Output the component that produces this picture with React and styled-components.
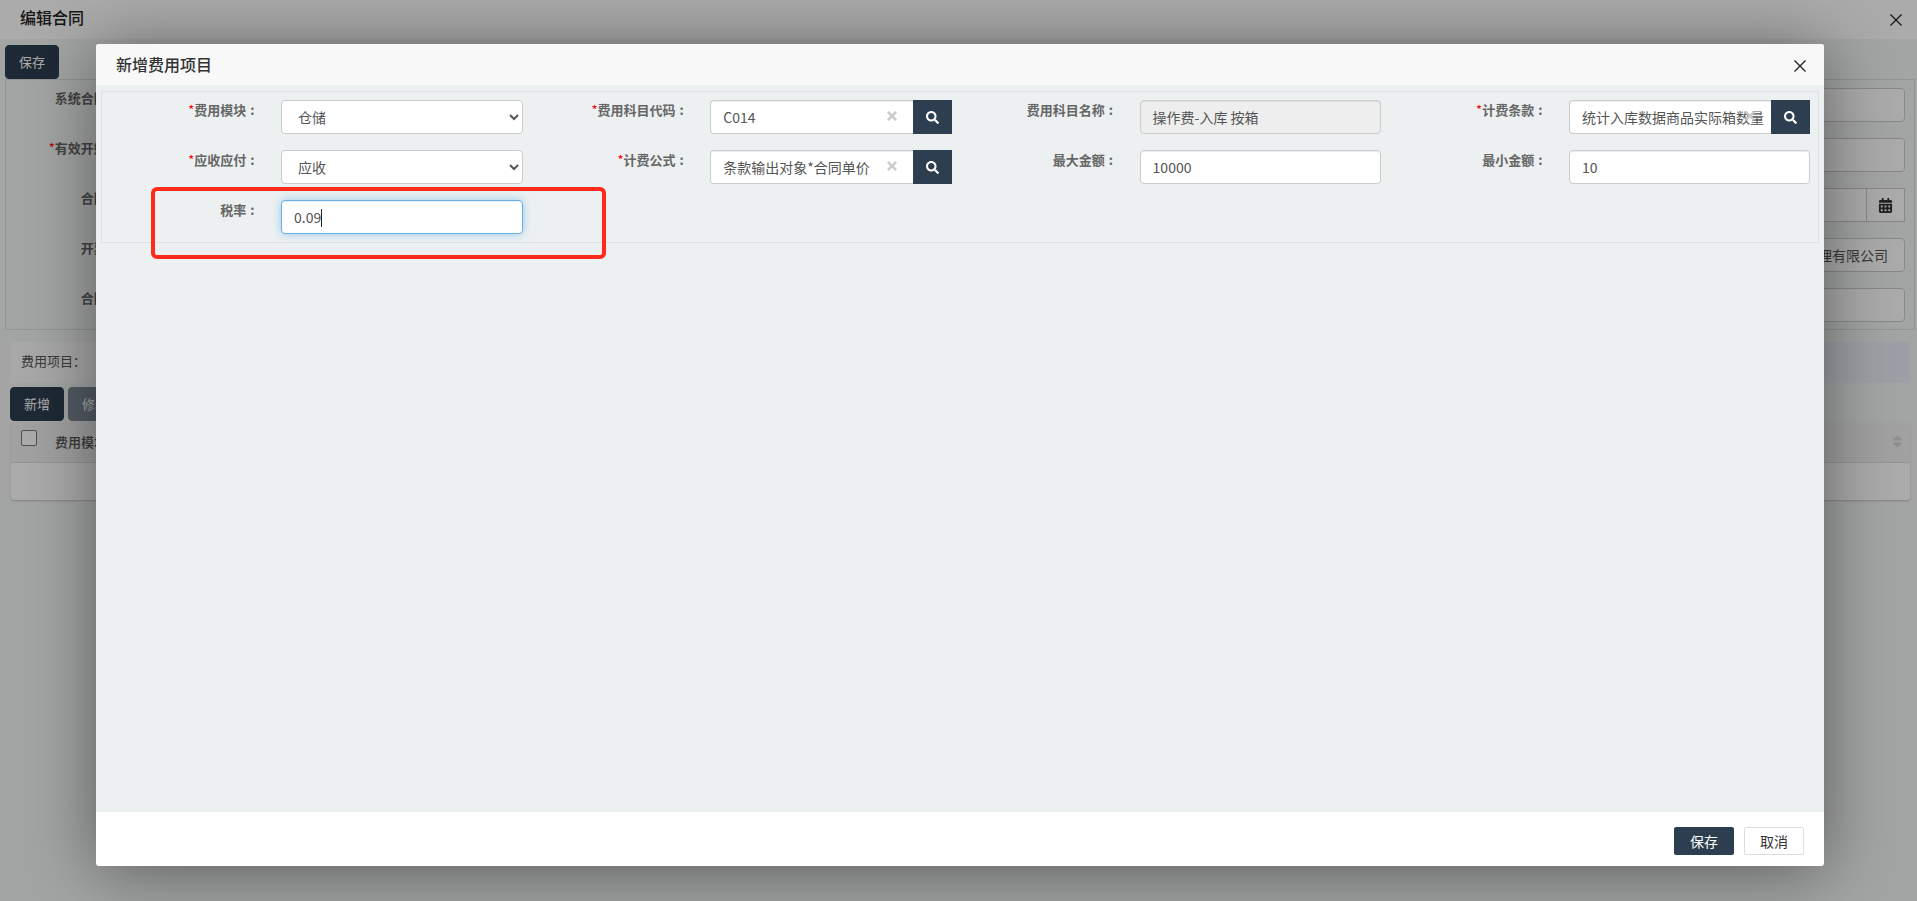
import React from "react";
import styled, { createGlobalStyle } from "styled-components";
import { FaSearch, FaTimes, FaCalendarAlt, FaSort } from "react-icons/fa";

const Global = createGlobalStyle`
  html, body { margin: 0; padding: 0; height: 901px; overflow: hidden; background: #f4f5f5; }
  * { box-sizing: border-box; }
  body { font-family: "Noto Sans CJK SC", "Open Sans", sans-serif; font-size: 13px; color: #555; }
`;

const Page = styled.div`
  position: relative;
  width: 1917px;
  height: 901px;
  overflow: hidden;
`;
const PageHeader = styled.header`
  height: 39px;
  background: #fff;
  display: flex;
  align-items: center;
  justify-content: space-between;
  padding: 0 15px 0 20px;
`;
const PageTitle = styled.h1`
  margin: 0 0 5px;
  font-size: 16px;
  font-weight: 500;
  color: #222;
`;
const CloseGlyph = styled.svg`
  display: block;
  width: ${(p) => p.$size}px;
  height: ${(p) => p.$size}px;
  stroke: #222;
  stroke-width: 1.3;
  fill: none;
`;
const Toolbar = styled.div`
  padding: 6px 0 0 5px;
  height: 40px;
`;
const DarkButton = styled.button`
  height: 34px;
  width: 54px;
  border: 1px solid #2c3e50;
  border-radius: 4px;
  background: ${(p) => (p.$muted ? "#7c8895" : "#2c3e50")};
  border-color: ${(p) => (p.$muted ? "#7c8895" : "#2c3e50")};
  color: #fff;
  font: 400 13px "Noto Sans CJK SC", sans-serif;
  padding: 0 0 2px;
`;
const BackPanel = styled.section`
  margin: 0 2px 0 5px;
  height: 251px;
  border: 1px solid #ddd;
  padding: 8px 9px 0 0;
  display: grid;
  grid-auto-rows: 50px;
`;
const BackRow = styled.div`
  display: grid;
  grid-template-columns: 122px 1fr 240px;
`;
const BackLabel = styled.label`
  text-align: right;
  font-size: 13px;
  font-weight: 700;
  color: #666;
  line-height: 20px;
  white-space: nowrap;
`;
const Star = styled.span`
  color: #f00;
  font-weight: 400;
`;
const Colon = styled.span`
  padding-left: 4px;
`;
const BackInput = styled.div`
  grid-column: 3;
  height: 34px;
  border: 1px solid #ccc;
  border-radius: 4px;
  background: #fff;
  font-size: 14px;
  line-height: 32px;
  text-align: right;
  padding-right: 16px;
  color: #555;
  overflow: hidden;
`;
const DateGroup = styled.div`
  grid-column: 3;
  display: flex;
  height: 34px;
  border: 1px solid #ccc;
  background: #fff;
  justify-content: flex-end;
`;
const DateAddon = styled.span`
  width: 38px;
  border-left: 1px solid #ccc;
  display: flex;
  align-items: center;
  justify-content: center;
  color: #333;
  font-size: 15px;
`;
const ItemsBar = styled.div`
  margin: 12px 7px 0 11px;
  height: 41px;
  background: linear-gradient(90deg, #fbfbfb 0%, #f7f7fa 70%, #eceef8 100%);
  padding: 0 10px;
  line-height: 38px;
  font-size: 13px;
  color: #555;
`;
const ItemsActions = styled.div`
  display: flex;
  gap: 4px;
  padding: 4px 0 0 10px;
`;
const Table = styled.div`
  margin: 2px 7px 0 11px;
  border-radius: 3px;
  box-shadow: 0 1px 2px rgba(0, 0, 0, 0.2);
  background: #fff;
`;
const TableHead = styled.div`
  height: 40px;
  background: #f0f0f0;
  border-bottom: 1px solid #ddd;
  display: flex;
  align-items: center;
  padding: 0 5px 2px 10px;
  font-size: 13px;
  font-weight: 500;
  color: #555;
`;
const Check = styled.span`
  width: 16px;
  height: 16px;
  border: 1px solid #767676;
  border-radius: 2px;
  background: #fff;
  margin: -8px 18px 0 0;
`;
const SortMark = styled.span`
  margin-left: auto;
  color: #d4d4d4;
  font-size: 15px;
  display: flex;
`;
const TableEmpty = styled.div`
  height: 37px;
`;

const Overlay = styled.div`
  position: absolute;
  inset: 0;
  background: rgba(0, 0, 0, 0.33);
`;
const Modal = styled.div`
  position: absolute;
  left: 96px;
  top: 44px;
  width: 1728px;
  height: 822px;
  background: #fff;
  border-radius: 3px;
  box-shadow: 0 5px 70px rgba(0, 0, 0, 0.45);
  display: flex;
  flex-direction: column;
  overflow: visible;
`;
const ModalHeader = styled.div`
  height: 41px;
  background: #f8f8f8;
  display: flex;
  align-items: center;
  justify-content: space-between;
  padding: 2px 18px 0 20px;
  border-radius: 3px 3px 0 0;
`;
const ModalTitle = styled.h2`
  margin: 0 0 4px;
  font-size: 16px;
  font-weight: 500;
  color: #333;
`;
const ModalBody = styled.div`
  flex: 1;
  background: #ecf0f1;
  padding: 6px 5px 0;
`;
const FormPanel = styled.div`
  height: 152px;
  border: 1px solid #dde1e3;
  padding: 8px 0 0;
  display: grid;
  grid-template-columns: repeat(4, 429.3px);
  grid-auto-rows: 50px;
`;
const Field = styled.div`
  display: grid;
  grid-template-columns: 152.5px 1fr;
  column-gap: 26.5px;
  align-items: start;
`;
const FieldLabel = styled.label`
  text-align: right;
  font-size: 13px;
  font-weight: 700;
  color: #666;
  line-height: 20px;
  white-space: nowrap;
`;
const Select = styled.select`
  width: 241.5px;
  height: 34px;
  border: 1px solid #ccc;
  border-radius: 4px;
  background: #fff;
  color: #555;
  padding: 0 12px;
  font: 400 14px "Noto Sans CJK SC", sans-serif;
  outline: none;
`;
const TextBox = styled.div`
  width: 241.5px;
  height: 34px;
  border: 1px solid ${(p) => (p.$focus ? "#66afe9" : "#ccc")};
  border-radius: 4px;
  background: ${(p) => (p.$disabled ? "#eee" : "#fff")};
  color: #555;
  padding: 0 12px;
  font-size: 14px;
  line-height: 32px;
  white-space: nowrap;
  overflow: hidden;
  box-shadow: ${(p) =>
    p.$focus
      ? "inset 0 1px 1px rgba(0,0,0,.075), 0 0 8px rgba(102,175,233,.6)"
      : "inset 0 1px 1px rgba(0,0,0,.075)"};
`;
const Caret = styled.span`
  display: inline-block;
  width: 1px;
  height: 18px;
  background: #222;
  vertical-align: -4px;
`;
const Lookup = styled.div`
  position: relative;
  display: flex;
  width: 241.5px;
  height: 34px;
`;
const LookupInput = styled.div`
  flex: 1;
  min-width: 0;
  height: 34px;
  border: 1px solid #ccc;
  border-right: 0;
  border-radius: 4px 0 0 4px;
  background: #fff;
  color: #555;
  padding: 0 12px;
  font-size: 14px;
  line-height: 32px;
  white-space: nowrap;
  overflow: hidden;
  box-shadow: inset 0 1px 1px rgba(0, 0, 0, 0.075);
`;
const Clear = styled.span`
  position: absolute;
  right: 53px;
  top: 9px;
  color: #ccc;
  font-size: 14px;
  display: flex;
`;
const SearchBtn = styled.button`
  width: 39px;
  height: 34px;
  border: 0;
  padding: 0;
  background: #2c3e50;
  color: #fff;
  display: flex;
  align-items: center;
  justify-content: center;
  font-size: 13px;
`;
const ModalFooter = styled.div`
  height: 54px;
  display: flex;
  justify-content: flex-end;
  gap: 10px;
  padding: 15px 20px 0 0;
`;
const FootBtn = styled.button`
  width: 60px;
  height: 28px;
  border-radius: 2px;
  padding: 0;
  font: 400 14px "Noto Sans CJK SC", sans-serif;
  border: 1px solid ${(p) => (p.$primary ? "#2c3e50" : "#ddd")};
  background: ${(p) => (p.$primary ? "#2c3e50" : "#fff")};
  color: ${(p) => (p.$primary ? "#fff" : "#333")};
`;
const Highlight = styled.div`
  position: absolute;
  left: 151px;
  top: 187px;
  width: 455px;
  height: 72px;
  border: 4px solid #ff2a1c;
  border-radius: 6px;
  pointer-events: none;
`;

const X = ({ size }) => (
  <CloseGlyph $size={size} viewBox="0 0 12 12">
    <path d="M0.5 0.5L11.5 11.5M11.5 0.5L0.5 11.5" />
  </CloseGlyph>
);

const LabelText = ({ label, required }) => (
  <FieldLabel>
    {required && <Star>*</Star>}
    {label}
    <Colon>:</Colon>
  </FieldLabel>
);

const LookupField = ({ label, value, required }) => (
  <Field>
    <LabelText label={label} required={required} />
    <Lookup>
      <LookupInput>{value}</LookupInput>
      <Clear>
        <FaTimes />
      </Clear>
      <SearchBtn>
        <FaSearch />
      </SearchBtn>
    </Lookup>
  </Field>
);

const TextField = ({ label, value, required, disabled, focus }) => (
  <Field>
    <LabelText label={label} required={required} />
    <TextBox $disabled={disabled} $focus={focus}>
      {value}
      {focus && <Caret />}
    </TextBox>
  </Field>
);

const SelectField = ({ label, value, options }) => (
  <Field>
    <LabelText label={label} required />
    <Select defaultValue={value}>
      {options.map((o) => (
        <option key={o}>{o}</option>
      ))}
    </Select>
  </Field>
);

export default function App() {
  return (
    <Page>
      <Global />
      <PageHeader>
        <PageTitle>编辑合同</PageTitle>
        <X size={12} />
      </PageHeader>
      <Toolbar>
        <DarkButton>保存</DarkButton>
      </Toolbar>
      <BackPanel>
        <BackRow>
          <BackLabel>系统合同号<Colon>:</Colon></BackLabel>
          <BackInput />
        </BackRow>
        <BackRow>
          <BackLabel>
            <Star>*</Star>有效开始日<Colon>:</Colon>
          </BackLabel>
          <BackInput />
        </BackRow>
        <BackRow>
          <BackLabel>合同号<Colon>:</Colon></BackLabel>
          <DateGroup>
            <DateAddon>
              <FaCalendarAlt />
            </DateAddon>
          </DateGroup>
        </BackRow>
        <BackRow>
          <BackLabel>开票方<Colon>:</Colon></BackLabel>
          <BackInput>理有限公司</BackInput>
        </BackRow>
        <BackRow>
          <BackLabel>合同额<Colon>:</Colon></BackLabel>
          <BackInput />
        </BackRow>
      </BackPanel>
      <ItemsBar>费用项目：</ItemsBar>
      <ItemsActions>
        <DarkButton>新增</DarkButton>
        <DarkButton $muted>修改</DarkButton>
      </ItemsActions>
      <Table>
        <TableHead>
          <Check />
          费用模块
          <SortMark>
            <FaSort />
          </SortMark>
        </TableHead>
        <TableEmpty />
      </Table>
      <Overlay />
      <Modal>
        <ModalHeader>
          <ModalTitle>新增费用项目</ModalTitle>
          <X size={12} />
        </ModalHeader>
        <ModalBody>
          <FormPanel>
            <SelectField label="费用模块" value="仓储" options={["仓储", "运输"]} />
            <LookupField label="费用科目代码" value="C014" required />
            <TextField label="费用科目名称" value="操作费-入库 按箱" disabled />
            <LookupField label="计费条款" value="统计入库数据商品实际箱数量" required />
            <SelectField label="应收应付" value="应收" options={["应收", "应付"]} />
            <LookupField label="计费公式" value="条款输出对象*合同单价" required />
            <TextField label="最大金额" value="10000" />
            <TextField label="最小金额" value="10" />
            <TextField label="税率" value="0.09" focus />
          </FormPanel>
        </ModalBody>
        <ModalFooter>
          <FootBtn $primary>保存</FootBtn>
          <FootBtn>取消</FootBtn>
        </ModalFooter>
      </Modal>
      <Highlight />
    </Page>
  );
}
